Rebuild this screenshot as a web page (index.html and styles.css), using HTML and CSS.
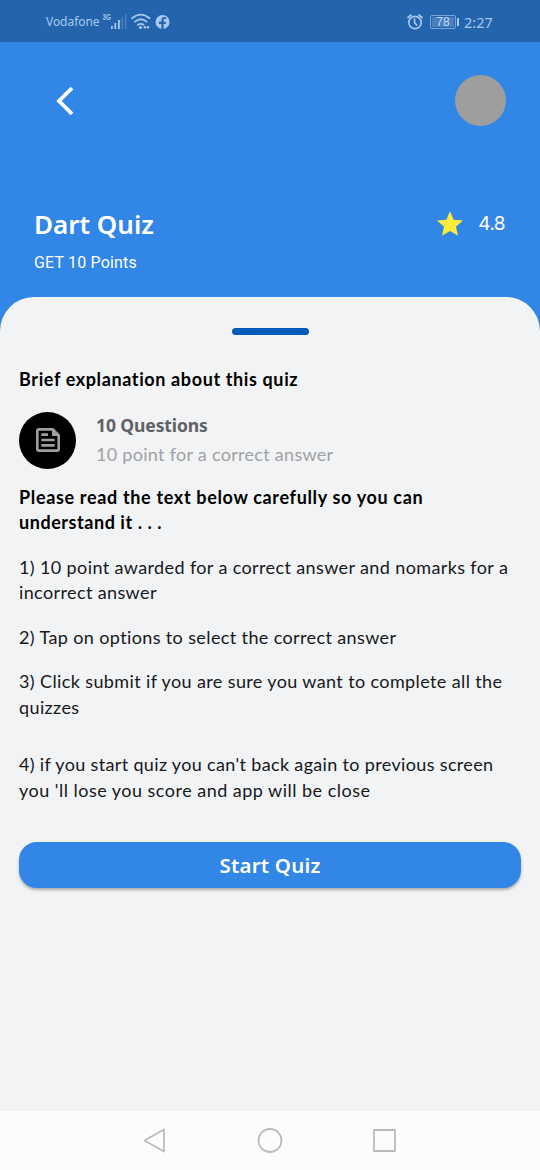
FILE: index.html
```html
<!DOCTYPE html>
<html lang="en">
<head>
<meta charset="utf-8">
<title>Dart Quiz</title>
<link rel="stylesheet" href="styles.css">
</head>
<body>
<div class="screen">
  <div class="status">
    <span class="carrier">Vodafone</span>
    <svg class="signals" width="70" height="20" viewBox="0 0 70 20" fill="#a6c8ee">
      <text class="net" x="0.500" y="7.500" textLength="8.500" lengthAdjust="spacingAndGlyphs">3G</text>
      <rect x="9" y="14" width="1.8" height="3"/><rect x="12.4" y="11" width="1.8" height="6"/><rect x="16" y="8" width="1.8" height="9"/>
      <rect x="19.5" y="5" width="1.4" height="12" opacity=".3"/><rect x="23" y="2" width="1.4" height="15" opacity=".3"/>
      <g fill="none" stroke="#a6c8ee" stroke-width="1.8" stroke-linecap="round"><path d="M30 6.2Q39 -1 47.500 6.200M33 9.600Q39 4.800 44.500 9.600M36 12.800Q38.800 10.800 41.500 12.800"/></g>
      <circle cx="38.500" cy="15.500" r="1.600"/><circle cx="43" cy="15.300" r="1.300"/><circle cx="46" cy="15.300" r="1.300"/>
      <circle cx="60.500" cy="10" r="7"/>
      <path d="M59.400 17v-5H57V9.700h2.400V8.200c0-2.200 1.200-3.300 3.200-3.300h1.500v2h-1.300c-1 0-1.200.6-1.200 1.300v1.500H64l-.4 2.300h-2v5z" fill="#2464ac"/>
    </svg>
    <svg class="alarm" width="16" height="18" viewBox="0 0 16 18" fill="none" stroke="#a6c8ee" stroke-width="1.700" stroke-linecap="round"><circle cx="8" cy="9.500" r="6.200"/><path d="M1 4.500L4 2M15 4.500L12 2M7.600 6v3.800l2.200 2.200"/></svg>
    <span class="battery"><span>78</span></span><i class="cap"></i>
    <span class="clock">2:27</span>
  </div>
  <header class="header">
    <div class="topbar">
      <svg width="18" height="30" viewBox="0 0 18 30" fill="none" stroke="#fff" stroke-width="3.800"><path d="M17 2L4 15L17 28"/></svg>
      <div class="avatar"></div>
    </div>
    <div class="title-row">
      <h1 class="title">Dart Quiz</h1>
      <div class="rating">
        <svg width="26" height="25" viewBox="2 2 20 19" fill="#ffeb3b"><path d="M12 17.270L18.180 21l-1.640-7.030L22 9.240l-7.190-.61L12 2 9.190 8.630 2 9.240l5.460 4.730L5.820 21z"/></svg>
        <span>4.8</span>
      </div>
    </div>
    <p class="points">GET 10 Points</p>
  </header>
  <main class="sheet">
    <div class="handle"></div>
    <h2 class="brief"><span>Brief explanation about this quiz</span></h2>
    <div class="info">
      <div class="badge"><svg width="32" height="32" viewBox="0 0 24 24" fill="#9e9e9e"><path d="M16 3H5c-1.100 0-2 .9-2 2v14c0 1.100.9 2 2 2h14c1.100 0 2-.9 2-2V8l-5-5zm3 16H5V5h10v4h4v10zM7 17h10v-2H7v2zm5-10H7v2h5V7zm-5 6h10v-2H7v2z"/></svg></div>
      <div class="info-text"><div class="count">10 Questions</div><div class="sub">10 point for a correct answer</div></div>
    </div>
    <h2 class="read"><span class="loose">Please read the text below carefully so you can</span><span class="tight">understand it . . .</span></h2>
    <p class="rule"><span>1) 10 point awarded for a correct answer and nomarks for a</span><span>incorrect answer</span></p>
    <p class="rule"><span>2) Tap on options to select the correct answer</span></p>
    <p class="rule"><span>3) Click submit if you are sure you want to complete all the</span><span>quizzes</span></p>
    <p class="rule last"><span>4) if you start quiz you can't back again to previous screen</span><span class="wide">you 'll lose you score and app will be close</span></p>
    <button class="start">Start Quiz</button>
  </main>
  <nav class="nav">
    <svg width="24" height="26" viewBox="0 0 24 26"><path d="M1.500 12.500L21 1.500V23.500z"/></svg>
    <svg width="26" height="26" viewBox="0 0 26 26"><circle cx="13" cy="12.500" r="11.500"/></svg>
    <svg width="24" height="26" viewBox="0 0 24 26"><rect x="1" y="2" width="21" height="21"/></svg>
  </nav>
</div>
</body>
</html>
```
FILE: styles.css
```css
* { box-sizing: border-box; }
body { margin: 0; }
h1, h2, p { margin: 0; }
.screen { width: 540px; height: 1170px; display: flex; flex-direction: column; background: #3186e6; overflow: hidden; font-family: Lato, sans-serif; font-variant-ligatures: none; }
.status { height: 42px; flex: none; background: #2464ac; color: #a6c8ee; display: flex; align-items: center; padding: 1px 46px 0 46px; font-family: "Noto Sans", sans-serif; }
.carrier { font-size: 12px; letter-spacing: -.05px; width: 56px; white-space: nowrap; }
.net { font: bold 9px "Liberation Sans", sans-serif; }
.alarm { margin-left: auto; }
.battery { width: 26px; height: 14px; border: 1px solid #78a5d8; border-radius: 2px; margin-left: 7px; padding: 1px; font: 12px/11px "Liberation Sans", sans-serif; text-align: center; }
.battery span { display: block; height: 10px; background: #4a80bf; color: #c4dcf6; }
.cap { width: 2px; height: 8px; background: #a6c8ee; margin-left: 1px; }
.clock { font-size: 14.500px; margin-left: 5px; width: 30px; white-space: nowrap; }
.header { height: 255px; flex: none; padding: 33px 35px 0; color: #fff; }
.topbar { display: flex; justify-content: space-between; align-items: center; padding-left: 20px; height: 51px; margin-right: -1px; }
.avatar { width: 51px; height: 51px; border-radius: 50%; background: #9e9e9e; }
.title-row { display: flex; justify-content: space-between; align-items: center; height: 36px; margin-top: 80px; margin-left: -1px; }
.title { font: 600 26px/36px "Noto Sans", sans-serif; letter-spacing: 0; }
.rating { display: flex; align-items: center; gap: 15px; font: 19px/24px Inter, sans-serif; letter-spacing: -.6px; }
.rating svg { margin-top: -2px; }
.points { font: 16px/20px Roboto, sans-serif; margin: 11px 0 0 -1px; letter-spacing: .17px; }
.sheet { flex: 1; background: #f1f3f5; border-radius: 34px 34px 0 0; padding: 31px 19px 0; display: flex; flex-direction: column; }
.handle { width: 77px; height: 7px; border-radius: 4px; background: #005ab8; align-self: center; }
.sheet h2 { font-size: 18px; line-height: 25.500px; font-weight: 700; color: #000; letter-spacing: .62px; }
.sheet h2 .tight { letter-spacing: .55px; }
.sheet h2 .loose { letter-spacing: .66px; }
.sheet h2 span, .rule span { display: block; white-space: nowrap; }
.brief { margin-top: 32px; }
.info { display: flex; gap: 20px; margin-top: 19px; }
.badge { width: 57px; height: 57px; border-radius: 50%; background: #000; display: flex; align-items: center; justify-content: center; }
.count { font: 700 17.500px/26px "Noto Sans", sans-serif; color: #606164; letter-spacing: -.1px; }
.sub { font-size: 18px; line-height: 26px; color: #a0a1a3; margin-top: 3px; letter-spacing: .29px; }
.read { margin-top: 16px; }
.rule { font-size: 18px; line-height: 25.500px; color: #17181a; margin-top: 19px; letter-spacing: .38px; }
.rule .wide { letter-spacing: .48px; }
.last { margin-top: 32px; letter-spacing: .34px; }
.start { height: 46px; margin-top: 39px; border: 0; border-radius: 18px; background: #3186e6; color: #fff; font: 600 20.500px/44px "Noto Sans", sans-serif; letter-spacing: .2px; padding: 0 0 1px; box-shadow: 0 2px 3px rgba(0,0,0,.3); }
.nav { height: 59px; flex: none; background: #fcfcfd; display: flex; justify-content: center; align-items: center; gap: 90px; }
.nav svg { fill: none; stroke: #bbb; stroke-width: 1.800; stroke-linejoin: round; }
```
